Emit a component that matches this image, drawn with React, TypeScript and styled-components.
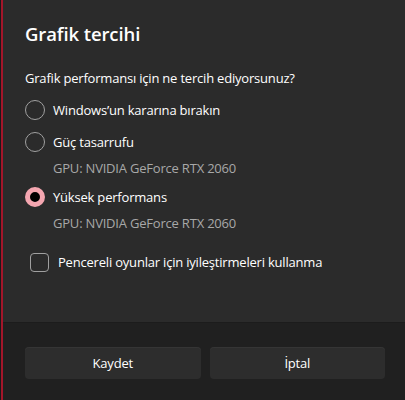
import React, { useState } from 'react';
import styled, { createGlobalStyle } from 'styled-components';

const GlobalStyle = createGlobalStyle`
  html, body {
    margin: 0;
    padding: 0;
    background: #202020;
  }
  body {
    font-family: 'Segoe UI', 'Open Sans', 'Noto Sans', sans-serif;
    color: #ffffff;
  }
`;

const options = [
  { id: 'auto', label: 'Windows’un kararına bırakın' },
  { id: 'save', label: 'Güç tasarrufu', gpu: 'GPU: NVIDIA GeForce RTX 2060' },
  { id: 'perf', label: 'Yüksek performans', gpu: 'GPU: NVIDIA GeForce RTX 2060' },
];

export default function App() {
  const [choice, setChoice] = useState('perf');
  const [windowed, setWindowed] = useState(false);

  return (
    <>
      <GlobalStyle />
      <Dialog>
        <Content>
          <Title>Grafik tercihi</Title>
          <Question>Grafik performansı için ne tercih ediyorsunuz?</Question>
          <Options>
            {options.map((o) => (
              <Option key={o.id}>
                <RadioRow onClick={() => setChoice(o.id)}>
                  <Radio $checked={choice === o.id} />
                  <Label>{o.label}</Label>
                </RadioRow>
                {o.gpu && <Gpu>{o.gpu}</Gpu>}
              </Option>
            ))}
          </Options>
          <CheckRow onClick={() => setWindowed(!windowed)}>
            <Checkbox $checked={windowed} />
            <Label>Pencereli oyunlar için iyileştirmeleri kullanma</Label>
          </CheckRow>
        </Content>
        <Footer>
          <Button>Kaydet</Button>
          <Button>İptal</Button>
        </Footer>
      </Dialog>
    </>
  );
}

const Dialog = styled.div`
  width: 405px;
  height: 400px;
  display: flex;
  flex-direction: column;
  box-sizing: border-box;
  border-left: 1px solid #1a1a1a;
  position: relative;

  &::before {
    content: '';
    position: absolute;
    left: 0;
    top: 0;
    bottom: 0;
    width: 2px;
    background: #a3162a;
  }
`;

const Content = styled.div`
  height: 322px;
  background: #2b2b2b;
  box-sizing: border-box;
  padding: 22px 0 0 24px;
  display: flex;
  flex-direction: column;
`;

const Title = styled.div`
  font-size: 18.5px;
  font-weight: 600;
  line-height: 24px;
  letter-spacing: -0.1px;
  margin-bottom: 22px;
`;

const Question = styled.div`
  font-size: 13px;
  line-height: 20px;
  letter-spacing: -0.2px;
  margin-bottom: 6px;
`;

const Options = styled.div`
  display: flex;
  flex-direction: column;
`;

const Option = styled.div`
  display: flex;
  flex-direction: column;
`;

const RadioRow = styled.div`
  display: flex;
  align-items: center;
  gap: 8px;
  height: 32px;
  cursor: pointer;
`;

const Radio = styled.span<{ $checked: boolean }>`
  width: 20px;
  height: 20px;
  box-sizing: border-box;
  border-radius: 50%;
  border: ${(p) => (p.$checked ? '5px solid #f4a6b0' : '1px solid #a0a0a0')};
  background: ${(p) => (p.$checked ? '#000000' : 'transparent')};
  flex-shrink: 0;
`;

const Label = styled.span`
  font-size: 13px;
  line-height: 20px;
  letter-spacing: -0.2px;
`;

const Gpu = styled.div`
  font-size: 13px;
  line-height: 20px;
  letter-spacing: -0.2px;
  color: #a8a8a8;
  padding-left: 28px;
  margin: 0 0 3px;
`;

const CheckRow = styled.div`
  display: flex;
  align-items: center;
  gap: 9px;
  height: 32px;
  margin: 10px 0 0 5px;
  cursor: pointer;
`;

const Checkbox = styled.span<{ $checked: boolean }>`
  width: 19px;
  height: 19px;
  box-sizing: border-box;
  border-radius: 4px;
  border: 1px solid #a0a0a0;
  background: ${(p) => (p.$checked ? '#f4a6b0' : 'transparent')};
  flex-shrink: 0;
`;

const Footer = styled.div`
  flex: 1;
  background: #202020;
  border-top: 1px solid #1c1c1c;
  display: flex;
  align-items: flex-start;
  gap: 9px;
  padding: 24px 20px 0 24px;
`;

const Button = styled.button`
  flex: 1;
  height: 32px;
  border: none;
  border-radius: 4px;
  background: #2d2d2d;
  box-shadow: inset 0 1px 0 #353535;
  color: #ffffff;
  font-family: inherit;
  font-size: 13px;
  letter-spacing: -0.2px;
`;
